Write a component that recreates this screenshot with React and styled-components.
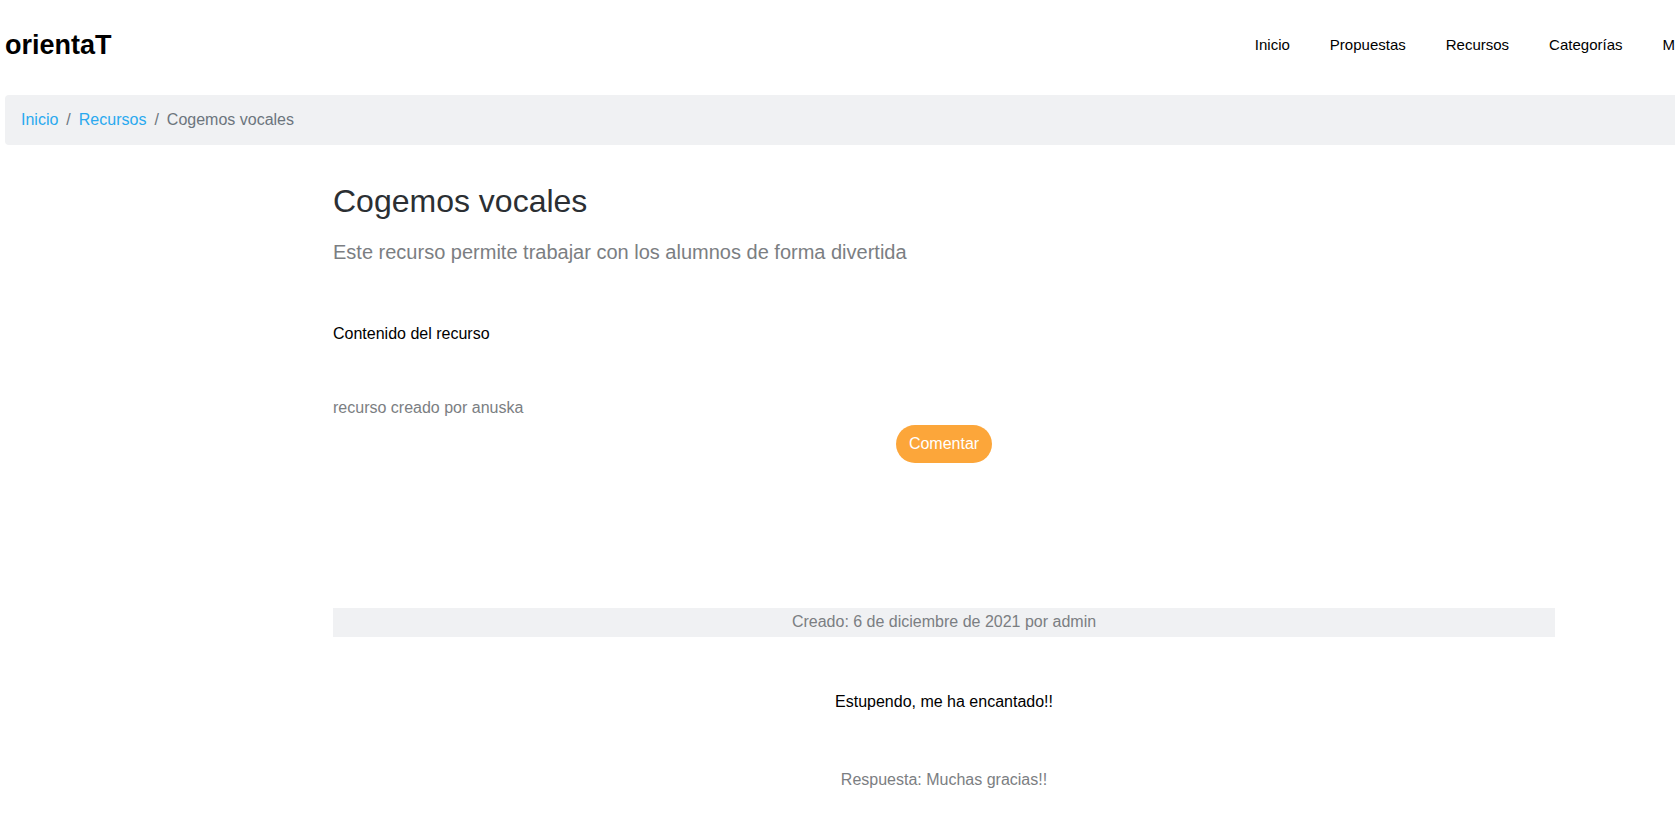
import React from "react";
import styled, { createGlobalStyle } from "styled-components";

const GlobalStyle = createGlobalStyle`
  html, body {
    margin: 0;
    padding: 0;
    overflow: hidden;
    background: #fff;
    font-family: "Liberation Sans", Arial, sans-serif;
  }
`;

const Page = styled.div`
  width: 1735px;
  padding-left: 5px;
  box-sizing: border-box;
`;

const Header = styled.header`
  display: flex;
  align-items: center;
  justify-content: space-between;
  height: 88px;
  margin-bottom: 7px;
`;

const Logo = styled.div`
  font-size: 27px;
  font-weight: 700;
  color: #000;
  margin-top: 2px;
`;

const Nav = styled.nav`
  display: flex;
  align-items: center;
`;

const NavLink = styled.a`
  padding: 0 20px;
  font-size: 15px;
  color: #000;
  text-decoration: none;
  white-space: nowrap;
`;

const Breadcrumb = styled.ol`
  display: flex;
  align-items: center;
  list-style: none;
  margin: 0;
  height: 50px;
  padding: 0 16px;
  background: #f0f1f3;
  border-radius: 4px;
  font-size: 16px;

  li + li::before {
    content: "/";
    color: #6c757d;
    padding: 0 8px;
  }
`;

const Crumb = styled.li`
  color: ${(p) => (p.$active ? "#6c757d" : "#2aa9ef")};
`;

const Main = styled.main`
  margin-left: 328px;
  width: 1222px;
  display: flex;
  flex-direction: column;
`;

const Title = styled.h1`
  margin: 37px 0 0;
  font-size: 32px;
  line-height: 1.2;
  font-weight: 400;
  color: #2b2f33;
`;

const Lead = styled.p`
  margin: 20px 0 0;
  font-size: 20px;
  line-height: 1.2;
  color: #7b7e82;
`;

const Body = styled.p`
  margin: 58px 0 0;
  font-size: 16px;
  line-height: 1.5;
  color: #000;
`;

const Author = styled.p`
  margin: 50px 0 0;
  font-size: 16px;
  line-height: 1.5;
  color: #7b7e82;
`;

const CommentButton = styled.button`
  align-self: center;
  margin-top: 5px;
  padding: 7px 13px;
  border: none;
  border-radius: 20px;
  background: #fca63a;
  color: #fff;
  font-family: inherit;
  font-size: 16px;
  line-height: 24px;
  cursor: pointer;
`;

const CreatedBar = styled.div`
  margin-top: 145px;
  padding: 2px 0 3px;
  background: #f0f1f3;
  text-align: center;
  font-size: 16px;
  line-height: 24px;
  color: #7b7e82;
`;

const CommentText = styled.p`
  margin: ${(p) => p.$gap}px 0 0;
  text-align: center;
  font-size: 16px;
  line-height: 1.5;
  color: ${(p) => (p.$muted ? "#7b7e82" : "#000")};
`;

const navItems = ["Inicio", "Propuestas", "Recursos", "Categorías", "Mi perfil"];

export default function App() {
  return (
    <>
      <GlobalStyle />
      <Page>
        <Header>
          <Logo>orientaT</Logo>
          <Nav>
            {navItems.map((item) => (
              <NavLink key={item} href="#">
                {item}
              </NavLink>
            ))}
          </Nav>
        </Header>

        <Breadcrumb>
          <Crumb>Inicio</Crumb>
          <Crumb>Recursos</Crumb>
          <Crumb $active>Cogemos vocales</Crumb>
        </Breadcrumb>

        <Main>
          <Title>Cogemos vocales</Title>
          <Lead>Este recurso permite trabajar con los alumnos de forma divertida</Lead>
          <Body>Contenido del recurso</Body>
          <Author>recurso creado por anuska</Author>
          <CommentButton>Comentar</CommentButton>
          <CreatedBar>Creado: 6 de diciembre de 2021 por admin</CreatedBar>
          <CommentText $gap={53}>Estupendo, me ha encantado!!</CommentText>
          <CommentText $gap={54} $muted>
            Respuesta: Muchas gracias!!
          </CommentText>
        </Main>
      </Page>
    </>
  );
}
